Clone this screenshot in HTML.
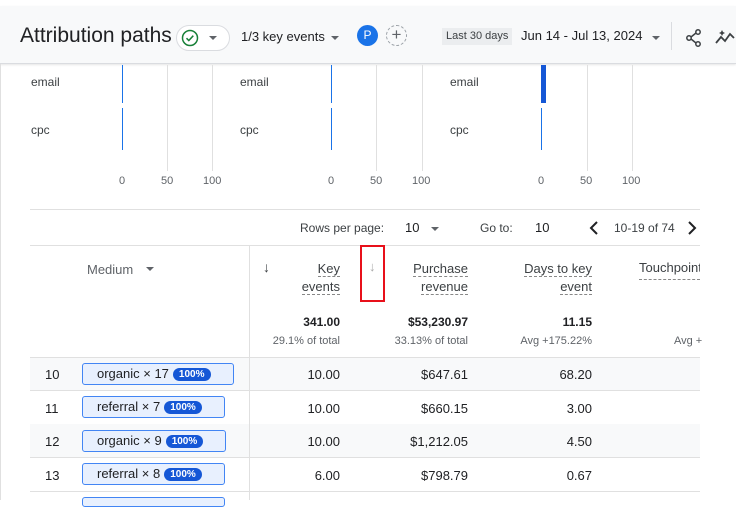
<!DOCTYPE html><html><head><style>
*{margin:0;padding:0;box-sizing:border-box}
body{width:736px;height:500px;overflow:hidden;background:#fff;font-family:"Liberation Sans",Arial,sans-serif;color:#202124;position:relative}
.a{position:absolute;white-space:nowrap}
.hdr{position:absolute;left:0;top:6px;width:736px;height:58px;background:#f8f9fa;border-bottom:1px solid #dadce0;box-shadow:0 1px 2px rgba(0,0,0,.1)}
.g{position:absolute;width:1px;background:#e0e0e0}
.bar{position:absolute;background:#1a73e8;width:1px}
.lab{font-size:12px;color:#3c4043}
.ax{font-size:11px;color:#5f6368}
.r{text-align:right;font-size:13px}
.row{position:absolute;left:30px;width:670px;height:34px;border-bottom:1px solid #e0e0e0}
.chip{position:absolute;height:22px;border:1px solid #4285f4;background:#e8f0fe;border-radius:3px;font-size:13px;padding:2px 14px;color:#202124}
.pct{display:inline-block;background:#1557d6;color:#fff;font-size:10px;font-weight:bold;border-radius:8px;padding:1px 6px;margin-left:4px;vertical-align:1px}
.du{border-bottom:1px dashed #888;}
.tri{position:absolute;width:0;height:0;border-left:4px solid transparent;border-right:4px solid transparent;border-top:4px solid #5f6368}
</style></head><body>
<div class="hdr">
<div class="a" style="left:20px;top:18px;font-size:21px;color:#202124">Attribution paths</div>
<div class="a" style="left:176px;top:19px;width:54px;height:26px;border:1px solid #dadce0;border-radius:13px;background:#fff"></div>
<svg class="a" style="left:181px;top:23px" width="18" height="18" viewBox="0 0 18 18"><circle cx="9" cy="9" r="7.5" fill="none" stroke="#188038" stroke-width="1.5"/><path d="M5.5 9.2l2.3 2.3 4.5-4.8" fill="none" stroke="#188038" stroke-width="1.5"/></svg>
<div class="tri" style="left:209px;top:30px"></div>
<div class="a" style="left:241px;top:23px;font-size:13px">1/3 key events</div>
<div class="tri" style="left:331px;top:30px"></div>
<div class="a" style="left:357px;top:19px;width:21px;height:21px;border-radius:50%;background:#1a73e8;color:#fff;font-size:12px;text-align:center;line-height:21px">P</div>
<div class="a" style="left:386px;top:19px;width:21px;height:21px;border-radius:50%;border:1px dashed #9aa0a6;color:#5f6368;font-size:17px;text-align:center;line-height:18px">+</div>
<div class="a" style="left:442px;top:22px;height:17px;padding:2px 4px;background:#ebedef;font-size:11px;color:#3c4043">Last 30 days</div>
<div class="a" style="left:521px;top:22px;font-size:13px">Jun 14 - Jul 13, 2024</div>
<div class="tri" style="left:652px;top:30px"></div>
<div class="a" style="left:671px;top:16px;width:1px;height:28px;background:#dadce0"></div>
<svg class="a" style="left:684px;top:22px" width="20" height="20" viewBox="0 0 20 20"><circle cx="14" cy="4" r="2.2" fill="none" stroke="#3c4043" stroke-width="1.5"/><circle cx="5" cy="10" r="2.2" fill="none" stroke="#3c4043" stroke-width="1.5"/><circle cx="14" cy="16" r="2.2" fill="none" stroke="#3c4043" stroke-width="1.5"/><path d="M7 9l5-4M7 11l5 4" stroke="#3c4043" stroke-width="1.5"/></svg>
<svg class="a" style="left:714px;top:22px" width="22" height="20" viewBox="0 0 22 20"><path d="M2 15l5-6 4 4 5-7 4 4" fill="none" stroke="#3c4043" stroke-width="1.8"/><path d="M8 2l1 2 2 1-2 1-1 2-1-2-2-1 2-1z" fill="#3c4043"/></svg>
</div>
<div class="a lab" style="left:31px;top:75px">email</div><div class="a lab" style="left:31px;top:123px">cpc</div>
<div class="a lab" style="left:240px;top:75px">email</div><div class="a lab" style="left:240px;top:123px">cpc</div>
<div class="a lab" style="left:450px;top:75px">email</div><div class="a lab" style="left:450px;top:123px">cpc</div>
<div class="g" style="left:167px;top:65px;height:106px"></div><div class="g" style="left:212px;top:65px;height:106px"></div>
<div class="g" style="left:376px;top:65px;height:106px"></div><div class="g" style="left:422px;top:65px;height:106px"></div>
<div class="g" style="left:587px;top:65px;height:106px"></div><div class="g" style="left:632px;top:65px;height:106px"></div>
<div class="bar" style="left:122px;top:65px;height:38px"></div><div class="bar" style="left:122px;top:108px;height:42px"></div>
<div class="bar" style="left:331px;top:65px;height:38px"></div><div class="bar" style="left:331px;top:108px;height:42px"></div>
<div class="bar" style="left:541px;top:65px;height:38px;width:5px;background:#1557d6"></div><div class="bar" style="left:541px;top:108px;height:42px"></div>
<div class="a ax" style="left:119px;top:175px">0</div><div class="a ax" style="left:161px;top:175px">50</div><div class="a ax" style="left:203px;top:175px">100</div>
<div class="a ax" style="left:328px;top:175px">0</div><div class="a ax" style="left:370px;top:175px">50</div><div class="a ax" style="left:412px;top:175px">100</div>
<div class="a ax" style="left:538px;top:175px">0</div><div class="a ax" style="left:580px;top:175px">50</div><div class="a ax" style="left:622px;top:175px">100</div>
<div class="a" style="left:30px;top:209px;width:670px;height:1px;background:#e0e0e0"></div>
<div class="a" style="left:300px;top:221px;font-size:12px;color:#3c4043">Rows per page:</div>
<div class="a" style="left:405px;top:220px;font-size:13px">10</div>
<div class="tri" style="left:431px;top:227px"></div>
<div class="a" style="left:480px;top:221px;font-size:12px;color:#3c4043">Go to:</div>
<div class="a" style="left:535px;top:220px;font-size:13px">10</div>
<svg class="a" style="left:588px;top:220px" width="12" height="16"><path d="M9 2L3 8l6 6" fill="none" stroke="#202124" stroke-width="2"/></svg>
<div class="a" style="left:614px;top:221px;font-size:12px;color:#3c4043">10-19 of 74</div>
<svg class="a" style="left:686px;top:220px" width="12" height="16"><path d="M3 2l6 6-6 6" fill="none" stroke="#202124" stroke-width="2"/></svg>
<div class="a" style="left:30px;top:245px;width:670px;height:1px;background:#e0e0e0"></div>
<div class="a" style="left:249px;top:246px;width:1px;height:254px;background:#e0e0e0"></div>
<div class="a" style="left:87px;top:262px;font-size:13px;color:#5f6368">Medium</div>
<div class="tri" style="left:146px;top:267px"></div>
<div class="a" style="left:263px;top:259px;font-size:14px;color:#3c4043">↓</div>
<div class="a r" style="right:396px;top:260px;line-height:18px;color:#3c4043"><span class="du">Key</span><br><span class="du">events</span></div>
<div class="a" style="left:360px;top:245px;width:25px;height:57px;border:2px solid #e8101a"></div>
<div class="a" style="left:369px;top:259px;font-size:13px;color:#aaa">↓</div>
<div class="a r" style="right:268px;top:260px;line-height:18px;color:#3c4043"><span class="du">Purchase</span><br><span class="du">revenue</span></div>
<div class="a r" style="right:144px;top:260px;line-height:18px;color:#3c4043"><span class="du">Days to key</span><br><span class="du">event</span></div>
<div class="a" style="left:639px;top:260px;font-size:13px;color:#3c4043;width:61px;height:20px;overflow:hidden;border-bottom:1px dashed #888">Touchpoints</div>
<div class="a r" style="right:396px;top:315px;font-weight:bold;font-size:12px">341.00</div>
<div class="a r" style="right:268px;top:315px;font-weight:bold;font-size:12px">$53,230.97</div>
<div class="a r" style="right:144px;top:315px;font-weight:bold;font-size:12px">11.15</div>
<div class="a r" style="right:396px;top:335px;font-size:11px;color:#5f6368">29.1% of total</div>
<div class="a r" style="right:268px;top:335px;font-size:11px;color:#5f6368">33.13% of total</div>
<div class="a r" style="right:144px;top:335px;font-size:11px;color:#5f6368">Avg +175.22%</div>
<div class="a" style="left:674px;top:335px;font-size:11px;color:#5f6368">Avg +</div>
<div class="row" style="top:357px;background:#f8f9fa;border-top:1px solid #e0e0e0"></div>
<div class="row" style="top:391px"></div>
<div class="row" style="top:424px;background:#f8f9fa"></div>
<div class="row" style="top:458px"></div>
<div class="a" style="left:249px;top:357px;width:1px;height:143px;background:#e0e0e0"></div>
<div class="a" style="left:45px;top:367px;font-size:13px">10</div>
<div class="chip" style="left:82px;top:363px;width:152px">organic × 17<span class="pct">100%</span></div>
<div class="a r" style="right:396px;top:367px">10.00</div><div class="a r" style="right:268px;top:367px">$647.61</div><div class="a r" style="right:144px;top:367px">68.20</div>
<div class="a" style="left:45px;top:401px;font-size:13px">11</div>
<div class="chip" style="left:82px;top:396px;width:143px">referral × 7<span class="pct">100%</span></div>
<div class="a r" style="right:396px;top:401px">10.00</div><div class="a r" style="right:268px;top:401px">$660.15</div><div class="a r" style="right:144px;top:401px">3.00</div>
<div class="a" style="left:45px;top:434px;font-size:13px">12</div>
<div class="chip" style="left:82px;top:430px;width:144px">organic × 9<span class="pct">100%</span></div>
<div class="a r" style="right:396px;top:434px">10.00</div><div class="a r" style="right:268px;top:434px">$1,212.05</div><div class="a r" style="right:144px;top:434px">4.50</div>
<div class="a" style="left:45px;top:468px;font-size:13px">13</div>
<div class="chip" style="left:82px;top:463px;width:143px">referral × 8<span class="pct">100%</span></div>
<div class="a r" style="right:396px;top:468px">6.00</div><div class="a r" style="right:268px;top:468px">$798.79</div><div class="a r" style="right:144px;top:468px">0.67</div>
<div class="chip" style="left:82px;top:497px;width:143px;height:10px;padding:0"></div>
<div class="a" style="left:0;top:64px;width:1px;height:436px;background:#e0e0e0"></div>
</body></html>
